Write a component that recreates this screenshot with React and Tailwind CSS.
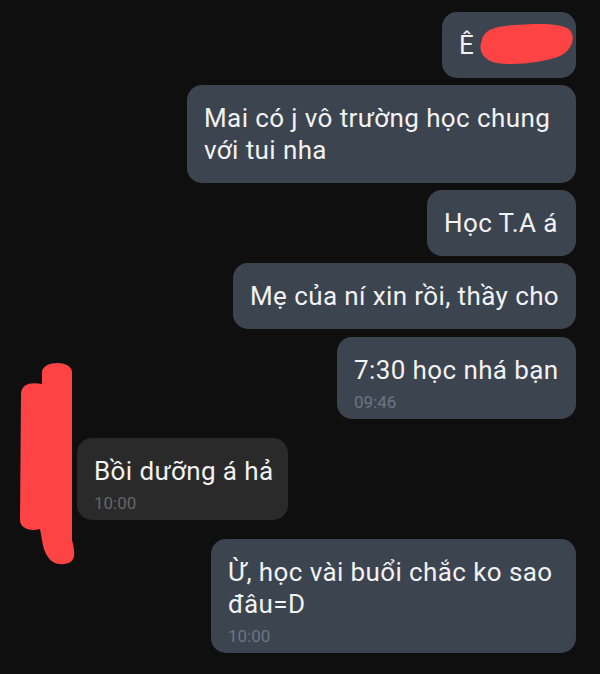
import React from 'react';

const messages = [
  { id: 1, out: true, lines: ['Ê'], w: 'w-[134px]', mt: 'mt-[12px]' },
  { id: 2, out: true, lines: ['Mai có j vô trường học chung', 'với tui nha'], w: 'w-[389px]', mt: 'mt-[7px]' },
  { id: 3, out: true, lines: ['Học T.A á'], w: 'w-[149px]', mt: 'mt-[7px]' },
  { id: 4, out: true, lines: ['Mẹ của ní xin rồi, thầy cho'], w: 'w-[343px]', mt: 'mt-[7px]' },
  { id: 5, out: true, lines: ['7:30 học nhá bạn'], time: '09:46', w: 'w-[239px]', mt: 'mt-[8px]' },
  { id: 6, out: false, lines: ['Bồi dưỡng á hả'], time: '10:00', w: 'w-[211px]', mt: 'mt-[19px]' },
  { id: 7, out: true, lines: ['Ừ, học vài buổi chắc ko sao', 'đâu=D'], time: '10:00', w: 'w-[365px]', mt: 'mt-[19px]' },
];

const Bubble = ({ msg }) => (
  <div
    className={`${msg.w} ${msg.mt} rounded-[15px] px-[17px] pt-[17px] ${
      msg.time ? 'pb-[7px]' : 'pb-[17px]'
    } ${msg.out ? 'self-end bg-[#3c4450]' : 'self-start bg-[#2a2a2a]'}`}
  >
    {msg.lines.map((line, i) => (
      <div key={i} className="whitespace-nowrap text-[26px] leading-[32px] tracking-[0.4px] text-[#f2f2f2]">
        {line}
      </div>
    ))}
    {msg.time && (
      <div
        className={`mt-[6px] text-[17px] leading-[20px] ${
          msg.out ? 'text-[#6d7581]' : 'text-[#666666]'
        }`}
      >
        {msg.time}
      </div>
    )}
  </div>
);

export default function App() {
  return (
    <div
      className="relative h-[674px] w-[600px] overflow-hidden bg-[#0f0f0f]"
      style={{ fontFamily: 'Roboto, "Noto Sans", sans-serif' }}
    >
      <div className="flex flex-col pl-[77px] pr-[24px]">
        {messages.map((m) => (
          <Bubble key={m.id} msg={m} />
        ))}
      </div>

      {/* red marker scribbles over names */}
      <svg className="pointer-events-none absolute left-0 top-0" width="600" height="674">
        <path
          d="M 482 40 C 484 28, 500 26, 515 25 C 535 24, 560 22, 570 30 C 576 38, 572 50, 560 56 C 545 62, 515 66, 497 63 C 485 61, 477 52, 482 40 Z"
          fill="#fd4343"
        />
        <path
          d="M 42 372 C 42 361, 71 359, 72 372 L 72 540 C 75 552, 77 563, 64 564 C 52 566, 44 556, 42 540 L 40 529 C 30 532, 20 528, 20 520 L 21 395 C 21 384, 30 382, 42 384 Z"
          fill="#fd4343"
        />
      </svg>
    </div>
  );
}
